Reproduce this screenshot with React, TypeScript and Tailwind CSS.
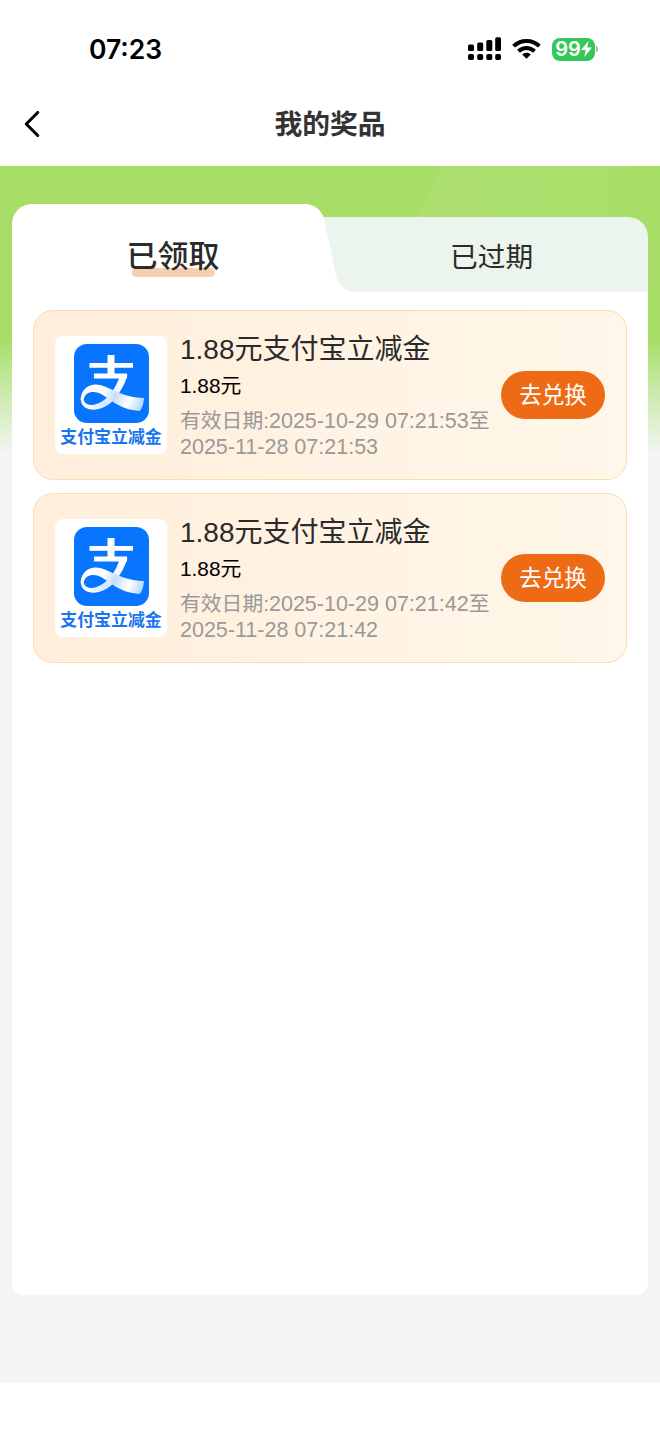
import React from 'react';
import { ChevronLeft } from 'lucide-react';

interface Prize {
  title: string;
  amount: string;
  start: string;
  end: string;
}

const prizes: Prize[] = [
  { title: '1.88元支付宝立减金', amount: '1.88元', start: '2025-10-29 07:21:53', end: '2025-11-28 07:21:53' },
  { title: '1.88元支付宝立减金', amount: '1.88元', start: '2025-10-29 07:21:42', end: '2025-11-28 07:21:42' },
];

function SignalIcon() {
  return (
    <svg width="34" height="24" viewBox="0 0 34 24" fill="#000">
      <rect x="0" y="7.5" width="6" height="6.5" rx="1.5" />
      <rect x="9.2" y="5.5" width="6" height="8.5" rx="1.5" />
      <rect x="18.3" y="3" width="6" height="11" rx="1.5" />
      <rect x="27.2" y="0.3" width="5.8" height="13.7" rx="1.5" />
      <rect x="0" y="17" width="6" height="6" rx="1.7" />
      <rect x="9.2" y="17" width="6" height="6" rx="1.7" />
      <rect x="18.3" y="17" width="6" height="6" rx="1.7" />
      <rect x="27.2" y="17" width="5.8" height="6" rx="1.7" />
    </svg>
  );
}

function WifiIcon() {
  return (
    <svg width="29" height="22" viewBox="0 0 29 22" fill="none" stroke="#000" strokeWidth="4">
      <path d="M1.6 8.2C8.6 1.1 20.4 1.1 27.4 8.2" />
      <path d="M6.5 13.2C11 8.8 18 8.8 22.5 13.2" />
      <path d="M14.5 20.7L10.2 16.6C12.5 14.2 16.5 14.2 18.8 16.6Z" fill="#000" stroke="none" />
    </svg>
  );
}

function AlipayLogo() {
  return (
    <svg width="75" height="79" viewBox="0 0 75 79" fill="none" className="shrink-0">
      <defs>
        <linearGradient id="tail" x1="30" y1="45" x2="70" y2="62" gradientUnits="userSpaceOnUse">
          <stop offset="0" stopColor="#fff" />
          <stop offset="0.3" stopColor="#c5defe" />
          <stop offset="0.65" stopColor="#fff" />
          <stop offset="1" stopColor="#a9cfff" />
        </linearGradient>
        <linearGradient id="loop" x1="45" y1="34" x2="10" y2="62" gradientUnits="userSpaceOnUse">
          <stop offset="0" stopColor="#fff" />
          <stop offset="0.6" stopColor="#d3e6ff" />
          <stop offset="1" stopColor="#fff" />
        </linearGradient>
      </defs>
      <rect width="75" height="79" rx="13" fill="#0875fe" />
      <path d="M15.5 21.3H59M20 32H53" stroke="#fff" strokeWidth="4.8" />
      <path d="M37 11V32" stroke="#fff" strokeWidth="7" />
      <path d="M46 31C43.5 40 39 48 33 53.5C26 60 18 62.5 13 60C8.5 57.5 8.5 51 12 47C9 49 6.5 52 6.8 56C7.5 63 14 66.5 22 65.5C32 64 40 57.5 46 47.5C50 41 52 36 53.5 31Z" fill="url(#loop)" />
      <path d="M6.8 56C6.5 48 12 41 21 40.5C34 40 43 53 70 54C69.5 60 68 65 65.5 67C50 66 40 59 31 52.5C22 45.5 11 47 10 55Z" fill="url(#tail)" />
    </svg>
  );
}

function PrizeCard({ prize }: { prize: Prize }) {
  return (
    <div className="flex h-[170px] items-center rounded-[20px] border border-[#fadcae] bg-gradient-to-r from-[#ffeedb] to-[#fff7ea] px-[21px]">
      <div className="flex h-[118px] w-[112px] shrink-0 flex-col items-center rounded-lg bg-white pt-2">
        <AlipayLogo />
        <div className="mt-[5px] whitespace-nowrap text-[16.9px] font-bold leading-[20px] text-[#1974f0]">支付宝立减金</div>
      </div>
      <div className="ml-[13px] w-[321px] shrink-0 whitespace-nowrap">
        <div className="-mt-px text-[28px] leading-[40px] text-[#2b2b2b]">{prize.title}</div>
        <div className="mt-px text-[20.8px] leading-[30px] text-black">{prize.amount}</div>
        <div className="mt-[7px] text-[20.8px] leading-[26px] text-[#999]">
          有效日期:<span className="text-[21.5px]">{prize.start}</span>至<br />
          <span className="text-[21.5px]">{prize.end}</span>
        </div>
      </div>
      <button className="h-12 w-[104px] shrink-0 rounded-full bg-[#ee6b15] pt-px text-[22.5px] leading-[48px] text-white">去兑换</button>
    </div>
  );
}

export default function App() {
  return (
    <div className="h-[1434px] w-[660px] overflow-hidden bg-white font-['Liberation_Sans','Noto_Sans_CJK_SC',sans-serif]">
      <header className="h-[166px]">
        <div className="flex h-[82px] items-start pl-[89px] pr-[62px] pt-[33px]">
          <div className="font-['Inter',sans-serif] text-[26.5px] font-semibold leading-[32px]">07:23</div>
          <div className="ml-auto flex h-8 items-center">
            <SignalIcon />
            <div className="ml-[10px]"><WifiIcon /></div>
            <div className="ml-[11px] flex h-[23px] w-[43px] items-center justify-center rounded-[8px] bg-[#35c759] text-white">
              <span className="font-['Inter',sans-serif] text-[20px] font-semibold leading-none">99</span>
              <svg width="11" height="16" viewBox="0 0 11 16" fill="#fff">
                <path d="M7.5 0L0 9H4.7L3.3 16L11 6.6H6.2Z" />
              </svg>
            </div>
            <div className="ml-px h-[6px] w-[2px] rounded-r bg-[#b5b5b5]" />
          </div>
        </div>
        <div className="grid h-[84px] grid-cols-3 items-center">
          <ChevronLeft className="ml-[9px] h-[46px] w-[46px]" strokeWidth={1.6} />
          <h1 className="pt-px text-center text-[27.8px] font-bold text-[#333]">我的奖品</h1>
        </div>
      </header>

      <main className="relative h-[1217px] bg-[#f5f5f5] px-3 pt-[38px]">
        <div className="absolute inset-x-0 top-0 h-[290px] bg-gradient-to-b from-[#a7de67] from-[60%] to-[#f5f5f5]">
          <svg className="absolute right-0 top-0" width="245" height="52" viewBox="0 0 245 52">
            <defs>
              <linearGradient id="shine" x1="0" y1="0" x2="1" y2="0">
                <stop offset="0" stopColor="#addf71" />
                <stop offset="1" stopColor="#a7de67" />
              </linearGradient>
            </defs>
            <path d="M30 0H245V52H0Z" fill="url(#shine)" />
          </svg>
        </div>

        <div className="relative flex h-[1091px] flex-col">
          <div className="flex h-[88px]">
            <div className="relative z-10 w-[290px] rounded-tl-[20px] bg-white pt-[31px] text-center">
              <svg className="absolute left-[289.5px] top-0" width="60" height="88" viewBox="0 0 60 88">
                <path d="M0 0H2.5C12 0 20 6 22 15L33.5 69C36 82 43 88 54.5 88H0Z" fill="#fff" />
              </svg>
              <div className="relative ml-[32px] inline-block text-[31px] font-medium leading-[42px] text-[#2b2b2b]">
                <span className="absolute bottom-0 left-[5px] h-[9px] w-[83px] rounded-full bg-[#f6d0ae]" />
                <span className="relative top-px">已领取</span>
              </div>
            </div>
            <div className="mt-[13px] flex-1 rounded-tr-[20px] bg-[#ebf5ee] pl-[148px] pt-[21px] text-[27.7px] leading-[40px] text-[#2b2b2b]">已过期</div>
          </div>
          <div className="flex flex-1 flex-col gap-[13px] rounded-b-xl bg-white px-[21px] pt-[18px]">
            {prizes.map((prize, index) => (
              <PrizeCard key={index} prize={prize} />
            ))}
          </div>
        </div>
      </main>
    </div>
  );
}
